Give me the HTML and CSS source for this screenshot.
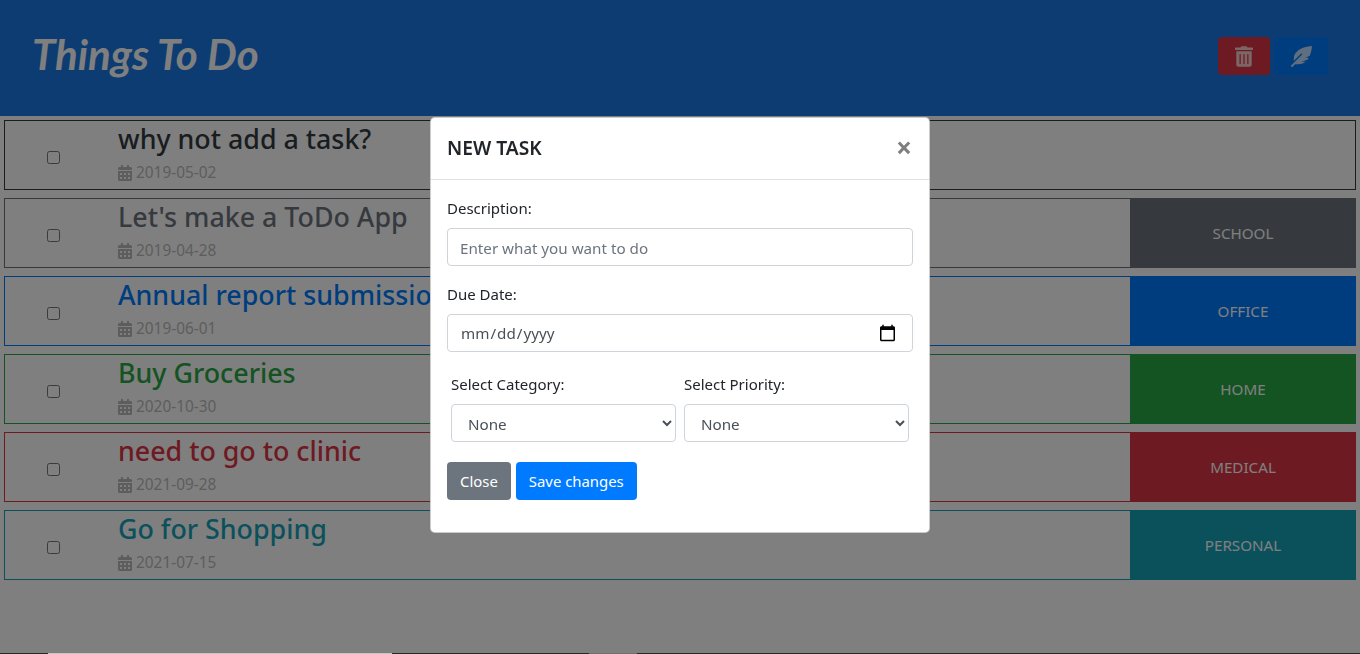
FILE: index.html
```html
<!DOCTYPE html>
<html>

<head>
    <title>Things To Do</title>

    <link rel="stylesheet" href="styles.css">

</head>

<body>

    <header class="topbar">
        <h1 class="brand">Things To Do</h1>
        <div class="actions">
            <button class="action-btn delete">
                <svg class="icon-trash" viewBox="0 0 448 512"><path d="M32 464a48 48 0 0 0 48 48h288a48 48 0 0 0 48-48V128H32zm272-256a16 16 0 0 1 32 0v224a16 16 0 0 1-32 0zm-96 0a16 16 0 0 1 32 0v224a16 16 0 0 1-32 0zm-96 0a16 16 0 0 1 32 0v224a16 16 0 0 1-32 0zM432 32H312l-9.4-18.7A24 24 0 0 0 281.1 0H166.8a23.72 23.72 0 0 0-21.4 13.3L136 32H16A16 16 0 0 0 0 48v32a16 16 0 0 0 16 16h416a16 16 0 0 0 16-16V48a16 16 0 0 0-16-16z"/></svg>
            </button>
            <button class="action-btn add">
                <svg class="icon-feather" viewBox="0 0 512 512"><path d="M512 0C460.22 3.56 96.44 38.2 71.01 287.61c-3.09 26.66-4.84 53.44-5.99 80.24l178.87-178.69c6.25-6.25 16.4-6.25 22.65 0s6.25 16.38 0 22.63L7.04 471.03c-9.38 9.37-9.38 24.57 0 33.94 9.38 9.37 24.59 9.37 33.98 0l57.13-57.07c42.09-.14 84.15-2.53 125.96-7.36 53.48-5.44 97.02-26.47 132.58-56.54H255.74l146.79-48.88c11.25-14.89 21.37-30.71 30.45-47.12h-81.14l106.54-53.21C500.29 132.86 510.19 26.26 512 0z"/></svg>
            </button>
        </div>
    </header>

    <svg class="sprites">
        <symbol id="cal" viewBox="0 0 448 512"><path d="M0 464c0 26.5 21.5 48 48 48h352c26.5 0 48-21.5 48-48V192H0v272zm320-196c0-6.6 5.4-12 12-12h40c6.6 0 12 5.4 12 12v40c0 6.6-5.4 12-12 12h-40c-6.6 0-12-5.4-12-12v-40zm0 128c0-6.6 5.4-12 12-12h40c6.6 0 12 5.4 12 12v40c0 6.6-5.4 12-12 12h-40c-6.6 0-12-5.4-12-12v-40zM192 268c0-6.6 5.4-12 12-12h40c6.6 0 12 5.4 12 12v40c0 6.6-5.4 12-12 12h-40c-6.6 0-12-5.4-12-12v-40zm0 128c0-6.6 5.4-12 12-12h40c6.6 0 12 5.4 12 12v40c0 6.6-5.4 12-12 12h-40c-6.6 0-12-5.4-12-12v-40zM64 268c0-6.6 5.4-12 12-12h40c6.6 0 12 5.4 12 12v40c0 6.6-5.4 12-12 12H76c-6.6 0-12-5.4-12-12v-40zm0 128c0-6.6 5.4-12 12-12h40c6.6 0 12 5.4 12 12v40c0 6.6-5.4 12-12 12H76c-6.6 0-12-5.4-12-12v-40zM400 64h-48V16c0-8.8-7.2-16-16-16h-32c-8.8 0-16 7.2-16 16v48H160V16c0-8.8-7.2-16-16-16h-32c-8.8 0-16 7.2-16 16v48H48C21.5 64 0 85.5 0 112v48h448v-48c0-26.5-21.5-48-48-48z"/></symbol>
    </svg>

    <main class="tasks">
        <div class="task task-plain">
            <div class="check"><input type="checkbox"></div>
            <div class="info">
                <div class="title">why not add a task?</div>
                <div class="date"><svg class="icon-cal"><use href="#cal"/></svg>2019-05-02</div>
            </div>
        </div>
        <div class="task task-school">
            <div class="check"><input type="checkbox"></div>
            <div class="info">
                <div class="title">Let's make a ToDo App</div>
                <div class="date"><svg class="icon-cal"><use href="#cal"/></svg>2019-04-28</div>
            </div>
            <div class="category">SCHOOL</div>
        </div>
        <div class="task task-office">
            <div class="check"><input type="checkbox"></div>
            <div class="info">
                <div class="title">Annual report submission</div>
                <div class="date"><svg class="icon-cal"><use href="#cal"/></svg>2019-06-01</div>
            </div>
            <div class="category">OFFICE</div>
        </div>
        <div class="task task-home">
            <div class="check"><input type="checkbox"></div>
            <div class="info">
                <div class="title">Buy Groceries</div>
                <div class="date"><svg class="icon-cal"><use href="#cal"/></svg>2020-10-30</div>
            </div>
            <div class="category">HOME</div>
        </div>
        <div class="task task-medical">
            <div class="check"><input type="checkbox"></div>
            <div class="info">
                <div class="title">need to go to clinic</div>
                <div class="date"><svg class="icon-cal"><use href="#cal"/></svg>2021-09-28</div>
            </div>
            <div class="category">MEDICAL</div>
        </div>
        <div class="task task-personal">
            <div class="check"><input type="checkbox"></div>
            <div class="info">
                <div class="title">Go for Shopping</div>
                <div class="date"><svg class="icon-cal"><use href="#cal"/></svg>2021-07-15</div>
            </div>
            <div class="category">PERSONAL</div>
        </div>
    </main>

    <div class="backdrop"></div>

    <div class="modal">
        <div class="modal-head">
            <h5 class="modal-title">NEW TASK</h5>
            <span class="close-x">&times;</span>
        </div>
        <form class="modal-body">
            <label class="field-label">Description:</label>
            <input class="control control-low" type="text" placeholder="Enter what you want to do">

            <label class="field-label due">Due Date:</label>
            <input class="control" type="date">

            <div class="selects">
                <div class="select-col">
                    <label class="field-label">Select Category:</label>
                    <select class="control control-low">
                        <option>None</option>
                    </select>
                </div>
                <div class="select-col">
                    <label class="field-label">Select Priority:</label>
                    <select class="control control-low">
                        <option>None</option>
                    </select>
                </div>
            </div>

            <div class="buttons">
                <button type="button" class="btn btn-close">Close</button>
                <button type="button" class="btn btn-save">Save changes</button>
            </div>
        </form>
    </div>

    <div class="edge-strip">
        <span class="edge-dark edge-start"></span>
        <span class="edge-light"></span>
        <span class="edge-dark edge-mid"></span>
        <span class="edge-grey"></span>
        <span class="edge-dark edge-end"></span>
    </div>

</body>

</html>
```

FILE: styles.css
```css
html, body {
    height: 100%;
}

body {
    margin: 0;
    overflow: hidden;
    background: #fff;
    color: #212529;
    font-family: "Noto Sans", "Open Sans", sans-serif;
    font-size: 16px;
    line-height: 1.5;
}

.sprites {
    display: none;
}

/* top bar */
.topbar {
    height: 116px;
    box-sizing: border-box;
    padding: 0 32px;
    background: #1a78e4;
    display: flex;
    align-items: center;
    justify-content: space-between;
}

.brand {
    margin: 0 0 8px;
    color: #fff;
    font-family: "Lato", sans-serif;
    font-style: italic;
    font-weight: 700;
    font-size: 42px;
    line-height: 1.2;
}

.actions {
    display: flex;
    gap: 4px;
    margin-bottom: 4px;
}

.action-btn {
    width: 54px;
    height: 38px;
    padding: 0;
    border: 0;
    border-radius: 4px;
    display: flex;
    align-items: center;
    justify-content: center;
}

.action-btn svg {
    fill: #fff;
    opacity: .75;
}

.delete {
    width: 52px;
    background: #dc3545;
}

.add {
    background: #007bff;
}

.icon-trash {
    width: 18px;
    height: 21px;
}

.icon-feather {
    width: 21px;
    height: 21px;
}

/* task list */
.tasks {
    padding: 4px 4px 0;
    display: flex;
    flex-direction: column;
    gap: 8px;
}

.task {
    height: 70px;
    box-sizing: border-box;
    border: 1px solid #343a40;
    color: #343a40;
    display: flex;
    align-items: stretch;
}

.check {
    width: 97px;
    flex: none;
    display: flex;
    justify-content: center;
    align-items: center;
    padding-top: 4px;
    box-sizing: border-box;
}

.check input {
    margin: 0;
    width: 13px;
    height: 13px;
}

.info {
    flex: 1;
    padding-left: 16px;
}

.title {
    font-size: 26.8px;
    font-weight: 500;
    line-height: 36px;
}

.date {
    margin-top: 5px;
    font-size: 15.4px;
    line-height: 21px;
    color: #bbb;
    display: flex;
    align-items: center;
}

.icon-cal {
    width: 14px;
    height: 16px;
    margin-right: 4px;
    fill: #bbb;
}

.category {
    width: 226px;
    flex: none;
    margin: -1px;
    box-sizing: border-box;
    display: flex;
    align-items: center;
    justify-content: center;
    font-size: 15.2px;
    color: #fff;
}

.task-school { border-color: #6c757d; }
.task-school .title { color: #6c757d; }
.task-school .category { background: #6c757d; }

.task-office { border-color: #007bff; }
.task-office .title { color: #007bff; }
.task-office .category { background: #007bff; }

.task-home { border-color: #28a745; }
.task-home .title { color: #28a745; }
.task-home .category { background: #28a745; }

.task-medical { border-color: #dc3545; }
.task-medical .title { color: #dc3545; }
.task-medical .category { background: #dc3545; }

.task-personal { border-color: #17a2b8; }
.task-personal .title { color: #17a2b8; }
.task-personal .category { background: #17a2b8; }

/* modal */
.backdrop {
    position: fixed;
    inset: 0;
    background: rgba(0, 0, 0, .5);
}

.modal {
    position: fixed;
    top: 117px;
    left: 430px;
    width: 500px;
    box-sizing: border-box;
    background: #fff;
    border: 1px solid rgba(0, 0, 0, .2);
    border-radius: 5px;
}

.modal-head {
    height: 62px;
    box-sizing: border-box;
    padding: 0 16px;
    border-bottom: 1px solid #dee2e6;
    display: flex;
    align-items: center;
    justify-content: space-between;
}

.modal-title {
    margin: 0;
    font-size: 19.2px;
    font-weight: 600;
}

.close-x {
    color: #7f7f7f;
    font-size: 28px;
    font-weight: 700;
    line-height: 1;
    margin: -4px 1px 0 0;
}

.modal-body {
    display: block;
    padding: 16px 16px 32px;
}

.field-label {
    display: block;
    font-size: 15px;
    line-height: 24px;
    margin-bottom: 8px;
}

.field-label.due {
    margin-top: 16px;
}

.control {
    display: block;
    width: 100%;
    height: 38px;
    box-sizing: border-box;
    padding: 6px 12px;
    border: 1px solid #ced4da;
    border-radius: 4px;
    background: #fff;
    color: #495057;
    font-family: inherit;
    font-size: 15.2px;
}

.control-low {
    padding-top: 8px;
    padding-bottom: 6px;
}

.control::placeholder {
    color: #6c757d;
}

.control::-webkit-calendar-picker-indicator {
    width: 19px;
    height: 19px;
    margin-right: 3px;
    padding: 0;
}

.selects {
    display: flex;
    gap: 8px;
    padding: 0 4px;
    margin-top: 20px;
}

.select-col {
    flex: 1;
}

.buttons {
    display: flex;
    gap: 5px;
    margin-top: 20px;
}

.btn {
    height: 38px;
    padding: 0 13px;
    border: 0;
    border-radius: 4px;
    color: #fff;
    font-family: inherit;
    font-size: 14.9px;
}

.btn-close {
    background: #6c757d;
}

.btn-save {
    background: #007bff;
}

/* one pixel row left along the bottom edge of the window */
.edge-strip {
    position: fixed;
    left: 0;
    right: 0;
    bottom: 0;
    height: 1px;
    display: flex;
}

.edge-dark {
    background: #232b29;
}

.edge-start {
    width: 48px;
}

.edge-light {
    width: 344px;
    background: #c4c4c4;
}

.edge-mid {
    width: 197px;
}

.edge-grey {
    width: 48px;
    background: #6f6f6f;
}

.edge-end {
    flex: 1;
}
```
